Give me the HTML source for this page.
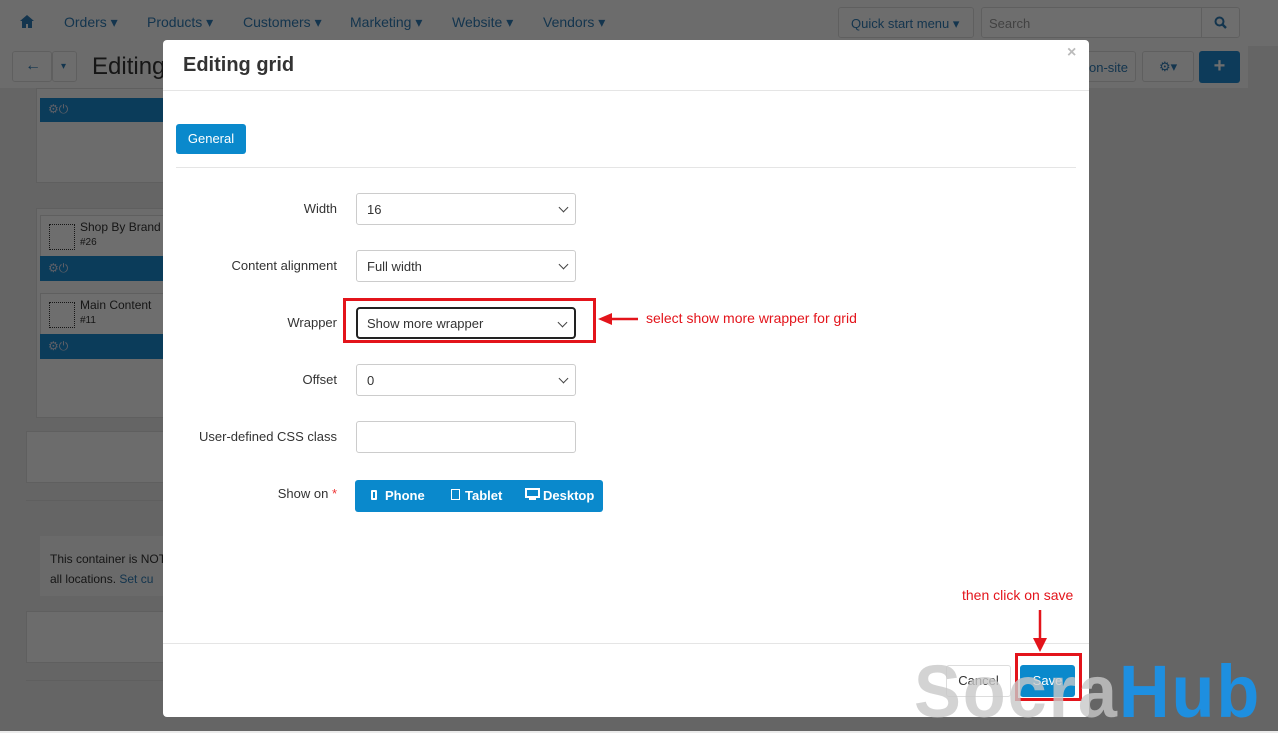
<!DOCTYPE html>
<html><head><meta charset="utf-8"><style>
*{box-sizing:border-box;margin:0;padding:0}
body{width:1278px;height:731px;overflow:hidden;font-family:"Liberation Sans",sans-serif;position:relative;background:#ebebeb}
.a{position:absolute}
.bg{left:0;top:0;width:1278px;height:731px;background:#e9eaeb}
.nav{left:0;top:0;width:1278px;height:46px;background:#fafafa}
.nav span{position:absolute;top:14px;font-size:14px;color:#2f7bb5}
.bar{left:0;top:46px;width:1248px;height:42px;background:#fafafa}
.btn{border:1px solid #ddd;border-radius:3px;background:#fdfdfd}
.sel,.inp{position:absolute;left:356px;width:220px;height:32px;border:1px solid #ccc;border-radius:3px;font-size:13px;color:#333;padding:8px 10px;background:#fff}
.sel:after{content:"";position:absolute;right:8px;top:10px;width:6px;height:6px;border-right:1.6px solid #444;border-bottom:1.6px solid #444;transform:rotate(45deg)}
.lbl{position:absolute;right:941px;font-size:13px;color:#333;text-align:right;white-space:nowrap}
.blk{background:#fbfbfb;border:1px solid #ddd}
.ov{left:0;top:0;width:1278px;height:731px;background:rgba(0,0,0,.57)}
</style></head><body>
<div class="a bg"></div>
<div class="a nav">
<svg class="a" style="left:20px;top:15px" width="14" height="13" viewBox="0 0 14 13"><path d="M7 0L0 6h2v7h4V9h2v4h4V6h2z" fill="#2f7bb5"/></svg>
<span style="left:64px">Orders ▾</span><span style="left:147px">Products ▾</span><span style="left:243px">Customers ▾</span><span style="left:350px">Marketing ▾</span><span style="left:452px">Website ▾</span><span style="left:543px">Vendors ▾</span>
<div class="a btn" style="left:838px;top:7px;width:136px;height:31px;font-size:13px;color:#2f7bb5;padding:8px 12px">Quick start menu ▾</div>
<div class="a btn" style="left:981px;top:7px;width:259px;height:31px;font-size:13px;color:#999;padding:8px 7px;background:#fff">Search</div>
<div class="a" style="left:1201px;top:8px;width:1px;height:29px;background:#ddd"></div>
<svg class="a" style="left:1214px;top:16px" width="13" height="13" viewBox="0 0 13 13"><circle cx="5.5" cy="5.5" r="4" fill="none" stroke="#2f7bb5" stroke-width="2"/><path d="M8.5 8.5L12 12" stroke="#2f7bb5" stroke-width="2.4"/></svg>
</div>
<div class="a bar"></div>
<div class="a btn" style="left:12px;top:51px;width:40px;height:31px;color:#2f7bb5;font-size:16px;font-weight:bold;padding:5px 12px">←</div>
<div class="a btn" style="left:52px;top:51px;width:25px;height:31px;color:#2f7bb5;font-size:10px;padding:9px 8px">▾</div>
<div class="a" style="left:92px;top:53px;font-size:24px;color:#333">Editing</div>
<div class="a btn" style="left:1070px;top:51px;width:66px;height:31px;font-size:13px;color:#2f7bb5;padding:8px 0 0 18px">on-site</div>
<div class="a btn" style="left:1142px;top:51px;width:52px;height:31px;font-size:13px;color:#2f7bb5;padding:7px 16px">⚙▾</div>
<div class="a" style="left:1199px;top:51px;width:41px;height:32px;background:#1f8ad0;border-radius:3px;color:#fff;font-size:20px;font-weight:bold;text-align:center;line-height:31px">+</div>
<div class="a blk" style="left:36px;top:88px;width:130px;height:95px"></div>
<div class="a" style="left:40px;top:98px;width:126px;height:24px;background:#1a8cd0;color:#dde;font-size:12px;padding:4px 8px">⚙⏻</div>
<div class="a blk" style="left:36px;top:208px;width:130px;height:210px"></div>
<div class="a" style="left:40px;top:215px;width:126px;height:66px;background:#fff;border:1px solid #ddd"></div>
<div class="a" style="left:49px;top:224px;width:26px;height:26px;border:1.5px dotted #333"></div>
<div class="a" style="left:80px;top:220px;font-size:12px;color:#333">Shop By Brand<br><span style="font-size:10px">#26</span></div>
<div class="a" style="left:40px;top:256px;width:126px;height:25px;background:#1a8cd0;color:#dde;font-size:12px;padding:5px 8px">⚙⏻</div>
<div class="a" style="left:40px;top:293px;width:126px;height:66px;background:#fff;border:1px solid #ddd"></div>
<div class="a" style="left:49px;top:302px;width:26px;height:26px;border:1.5px dotted #333"></div>
<div class="a" style="left:80px;top:298px;font-size:12px;color:#333">Main Content<br><span style="font-size:10px">#11</span></div>
<div class="a" style="left:40px;top:334px;width:126px;height:25px;background:#1a8cd0;color:#dde;font-size:12px;padding:5px 8px">⚙⏻</div>
<div class="a blk" style="left:26px;top:431px;width:140px;height:52px"></div>
<div class="a" style="left:26px;top:500px;width:140px;height:1px;background:#ddd"></div>
<div class="a" style="left:40px;top:536px;width:130px;height:60px;background:#f5f5f5"></div>
<div class="a" style="left:50px;top:549px;font-size:12px;color:#333;line-height:20px">This container is NOT<br>all locations. <span style="color:#2f7bb5">Set cu</span></div>
<div class="a blk" style="left:26px;top:611px;width:140px;height:52px"></div>
<div class="a" style="left:26px;top:680px;width:140px;height:1px;background:#ddd"></div>
<div class="a ov"></div>

<div class="a" style="left:163px;top:40px;width:926px;height:677px;background:#fff;border-radius:4px">
<div class="a" style="left:20px;top:14px;font-size:20px;font-weight:bold;color:#333">Editing grid</div>
<div class="a" style="left:904px;top:4px;font-size:16px;color:#bbb;font-weight:bold">×</div>
<div class="a" style="left:0;top:50px;width:926px;height:1px;background:#e5e5e5"></div>
<div class="a" style="left:13px;top:84px;width:70px;height:30px;background:#0a89cc;border-radius:3px;color:#fff;font-size:13px;text-align:center;line-height:30px">General</div>
<div class="a" style="left:13px;top:127px;width:900px;height:1px;background:#e5e5e5"></div>
<div class="a" style="left:0;top:603px;width:926px;height:1px;background:#e5e5e5"></div>
</div>
<div class="lbl" style="top:201px">Width</div>
<div class="sel" style="top:193px">16</div>
<div class="lbl" style="top:258px">Content alignment</div>
<div class="sel" style="top:250px">Full width</div>
<div class="lbl" style="top:315px">Wrapper</div>
<div class="sel" style="top:307px;border:2px solid #222;border-radius:4px;padding:7px 9px">Show more wrapper</div>
<div class="a" style="left:343px;top:298px;width:253px;height:45px;border:3px solid #e3141b"></div>
<svg class="a" style="left:598px;top:311px" width="42" height="16"><path d="M40 8H12" stroke="#e3141b" stroke-width="2.5"/><path d="M0 8L14 2V14z" fill="#e3141b"/></svg>
<div class="a" style="left:646px;top:310px;font-size:14px;color:#e3141b">select show more wrapper for grid</div>
<div class="lbl" style="top:372px">Offset</div>
<div class="sel" style="top:364px">0</div>
<div class="lbl" style="top:429px">User-defined CSS class</div>
<div class="inp" style="top:421px"></div>
<div class="lbl" style="top:486px">Show on <span style="color:#e33">*</span></div>
<div class="a" style="left:355px;top:480px;width:248px;height:32px;background:#0a89cc;border-radius:3px;color:#fff;font-size:13px;font-weight:bold;line-height:31px">
<span class="a" style="left:16px;top:10px;width:6px;height:10px;border:2px solid #fff;border-radius:1px"></span><span class="a" style="left:30px">Phone</span>
<span class="a" style="left:96px;top:9px;width:9px;height:11px;border:1.5px solid #fff"></span><span class="a" style="left:110px">Tablet</span>
<span class="a" style="left:170px;top:8px;width:15px;height:10px;border:2px solid #fff"></span><span class="a" style="left:174px;top:18px;width:7px;height:2px;background:#fff"></span><span class="a" style="left:188px">Desktop</span>
</div>
<div class="a" style="left:962px;top:587px;font-size:14px;color:#e3141b">then click on save</div>
<svg class="a" style="left:1033px;top:610px" width="14" height="42"><path d="M7 0V30" stroke="#e3141b" stroke-width="2.5"/><path d="M0 28L7 42L14 28z" fill="#e3141b"/></svg>
<div class="a" style="left:946px;top:665px;width:65px;height:32px;border:1px solid #ddd;border-radius:3px;font-size:13px;color:#333;text-align:center;line-height:30px">Cancel</div>
<div class="a" style="left:1020px;top:665px;width:55px;height:32px;background:#0a89cc;border-radius:3px;font-size:13px;color:#fff;text-align:center;line-height:32px">Save</div>
<div class="a" style="left:1015px;top:653px;width:67px;height:48px;border:3px solid #e3141b"></div>
<div class="a" style="left:914px;top:655px;font-size:74px;font-weight:bold;line-height:74px;letter-spacing:2px;white-space:nowrap;transform:scaleX(0.95);transform-origin:left"><span style="color:rgba(200,200,200,.8)">Socra</span><span style="color:#1e8fe0">Hub</span></div>
</body></html>
